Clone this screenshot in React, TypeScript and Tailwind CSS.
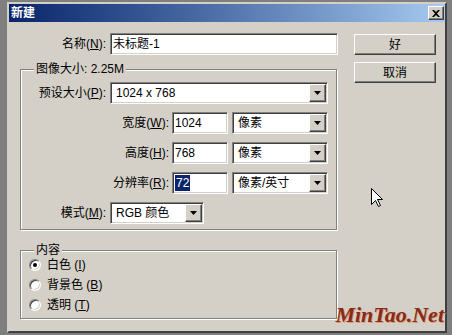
import type { ReactNode } from "react";

const FONT = "font-['Liberation_Sans','Noto_Sans_CJK_SC',sans-serif]";
const SUNKEN =
  "border border-t-[#808080] border-l-[#808080] border-b-white border-r-white shadow-[inset_1px_1px_0_#404040,inset_-1px_-1px_0_#d4d0c8] bg-white";
const RAISED =
  "border border-t-white border-l-white border-b-[#404040] border-r-[#404040] shadow-[inset_-1px_-1px_0_#808080,inset_1px_1px_0_#d4d0c8] bg-[#d4d0c8]";
const ETCHED = "border border-[#808080] shadow-[inset_1px_1px_0_#fff,1px_1px_0_#fff]";

function Label({ text, keyChar, width }: { text: string; keyChar: string; width: string }) {
  return (
    <div className={`${width} shrink-0 text-right text-[12px] leading-none text-black`}>
      {text}(<u>{keyChar}</u>):
    </div>
  );
}

function Select({ value, width }: { value: string; width: string }) {
  return (
    <div className={`${SUNKEN} ${width} h-[22px] flex items-center`}>
      <span className="flex-1 pl-[5px] text-[12px] leading-none">{value}</span>
      <div className={`${RAISED} w-[17px] h-[18px] mr-px flex items-center justify-center`}>
        <svg width="7" height="4" viewBox="0 0 7 4">
          <path d="M0 0H7L3.5 4Z" fill="#000" />
        </svg>
      </div>
    </div>
  );
}

function Field({ children, width }: { children: ReactNode; width: string }) {
  return (
    <div className={`${SUNKEN} ${width} h-[22px] flex items-center pl-[2px] text-[12px] leading-none`}>
      {children}
    </div>
  );
}

function Radio({ checked, label, keyChar }: { checked?: boolean; label: string; keyChar: string }) {
  return (
    <div className="flex items-center h-[20px] pl-[8px]">
      <div className="w-[12px] h-[12px] rounded-full bg-white border border-t-[#808080] border-l-[#808080] border-b-white border-r-white shadow-[inset_1px_1px_0_#404040,inset_-1px_-1px_0_#d4d0c8] flex items-center justify-center">
        {checked && <div className="w-[4px] h-[4px] rounded-full bg-black" />}
      </div>
      <span className="ml-[6px] text-[12px] leading-none">
        {label} (<u>{keyChar}</u>)
      </span>
    </div>
  );
}

export default function App() {
  return (
    <div className={`relative w-[452px] h-[335px] bg-[#7f7f7f] pt-[2px] pl-[7px] ${FONT}`}>
      {/* Window */}
      <div className="relative w-[440px] h-[331px] bg-[#d4d0c8] border-2 border-t-[#d4d0c8] border-l-[#d4d0c8] border-b-[#404040] border-r-[#404040]">
        {/* Title bar */}
        <div className="h-[18px] flex items-center justify-between bg-linear-to-r from-[#0a246a] to-[#a6caf0] pl-[2px] pr-[1px]">
          <span className="text-white font-bold text-[12px] leading-none">新建</span>
          <div className={`${RAISED} w-[16px] h-[14px] flex items-center justify-center`}>
            <svg width="8" height="7" viewBox="0 0 8 7">
              <path d="M0 0h2l2 2 2-2h2L5 3.5 8 7H6L4 5 2 7H0l3-3.5Z" fill="#000" />
            </svg>
          </div>
        </div>

        {/* Body */}
        <div className="flex pl-[11px] pt-[11px] text-black">
          {/* Left column */}
          <div className="w-[318px]">
            <div className="flex items-center h-[22px]">
              <Label text="名称" keyChar="N" width="w-[86px]" />
              <div className="ml-[4px]">
                <Field width="w-[228px]">未标题-1</Field>
              </div>
            </div>

            {/* Image size group */}
            <div className={`relative mt-[14px] w-[317px] ${ETCHED} pt-[12px] pb-[5px] flex flex-col gap-[8px]`}>
              <span className="absolute -top-[7px] left-[13px] px-[2px] bg-[#d4d0c8] text-[12px] leading-none">
                图像大小: 2.25M
              </span>
              <div className="flex items-center h-[22px]">
                <Label text="预设大小" keyChar="P" width="w-[85px]" />
                <div className="ml-[4px]">
                  <Select value="1024 x 768" width="w-[218px]" />
                </div>
              </div>
              <div className="flex items-center h-[22px]">
                <Label text="宽度" keyChar="W" width="w-[148px]" />
                <div className="ml-[3px]">
                  <Field width="w-[56px]">1024</Field>
                </div>
                <div className="ml-[4px]">
                  <Select value="像素" width="w-[96px]" />
                </div>
              </div>
              <div className="flex items-center h-[22px]">
                <Label text="高度" keyChar="H" width="w-[148px]" />
                <div className="ml-[3px]">
                  <Field width="w-[56px]">768</Field>
                </div>
                <div className="ml-[4px]">
                  <Select value="像素" width="w-[96px]" />
                </div>
              </div>
              <div className="flex items-center h-[22px]">
                <Label text="分辨率" keyChar="R" width="w-[148px]" />
                <div className="ml-[3px]">
                  <Field width="w-[56px]">
                    <span className="bg-[#0a246a] text-white px-px py-[2px]">72</span>
                  </Field>
                </div>
                <div className="ml-[4px]">
                  <Select value="像素/英寸" width="w-[96px]" />
                </div>
              </div>
              <div className="flex items-center h-[22px]">
                <Label text="模式" keyChar="M" width="w-[85px]" />
                <div className="ml-[4px]">
                  <Select value="RGB 颜色" width="w-[94px]" />
                </div>
              </div>
            </div>

            {/* Contents group */}
            <div className={`relative mt-[20px] w-[317px] ${ETCHED} pt-[4px] pb-[3px]`}>
              <span className="absolute -top-[7px] left-[13px] px-[2px] bg-[#d4d0c8] text-[12px] leading-none">
                内容
              </span>
              <Radio checked label="白色" keyChar="I" />
              <Radio label="背景色" keyChar="B" />
              <Radio label="透明" keyChar="T" />
            </div>
          </div>

          {/* Right column */}
          <div className="ml-[16px] mt-px flex flex-col gap-[7px]">
            <div className={`${RAISED} w-[82px] h-[21px] flex items-center justify-center text-[12px] leading-none`}>
              好
            </div>
            <div className={`${RAISED} w-[82px] h-[21px] flex items-center justify-center text-[12px] leading-none`}>
              取消
            </div>
          </div>
        </div>

        {/* Watermark */}
        <span className="absolute right-[1px] bottom-[5px] font-['Liberation_Serif',serif] italic font-bold text-[22px] leading-none text-[#8a2a18] [text-shadow:1px_1px_0_#d8a078]">
          MinTao.Net
        </span>
      </div>

      {/* Mouse cursor */}
      <svg className="absolute left-[371px] top-[188px]" width="12" height="20" viewBox="0 0 12 20">
        <path d="M0.5 0.5V16.5L4.5 12.5L7.5 18.5L9.5 17.5L6.5 11.5H11.5Z" fill="#fff" stroke="#000" strokeWidth="1" />
      </svg>
    </div>
  );
}
